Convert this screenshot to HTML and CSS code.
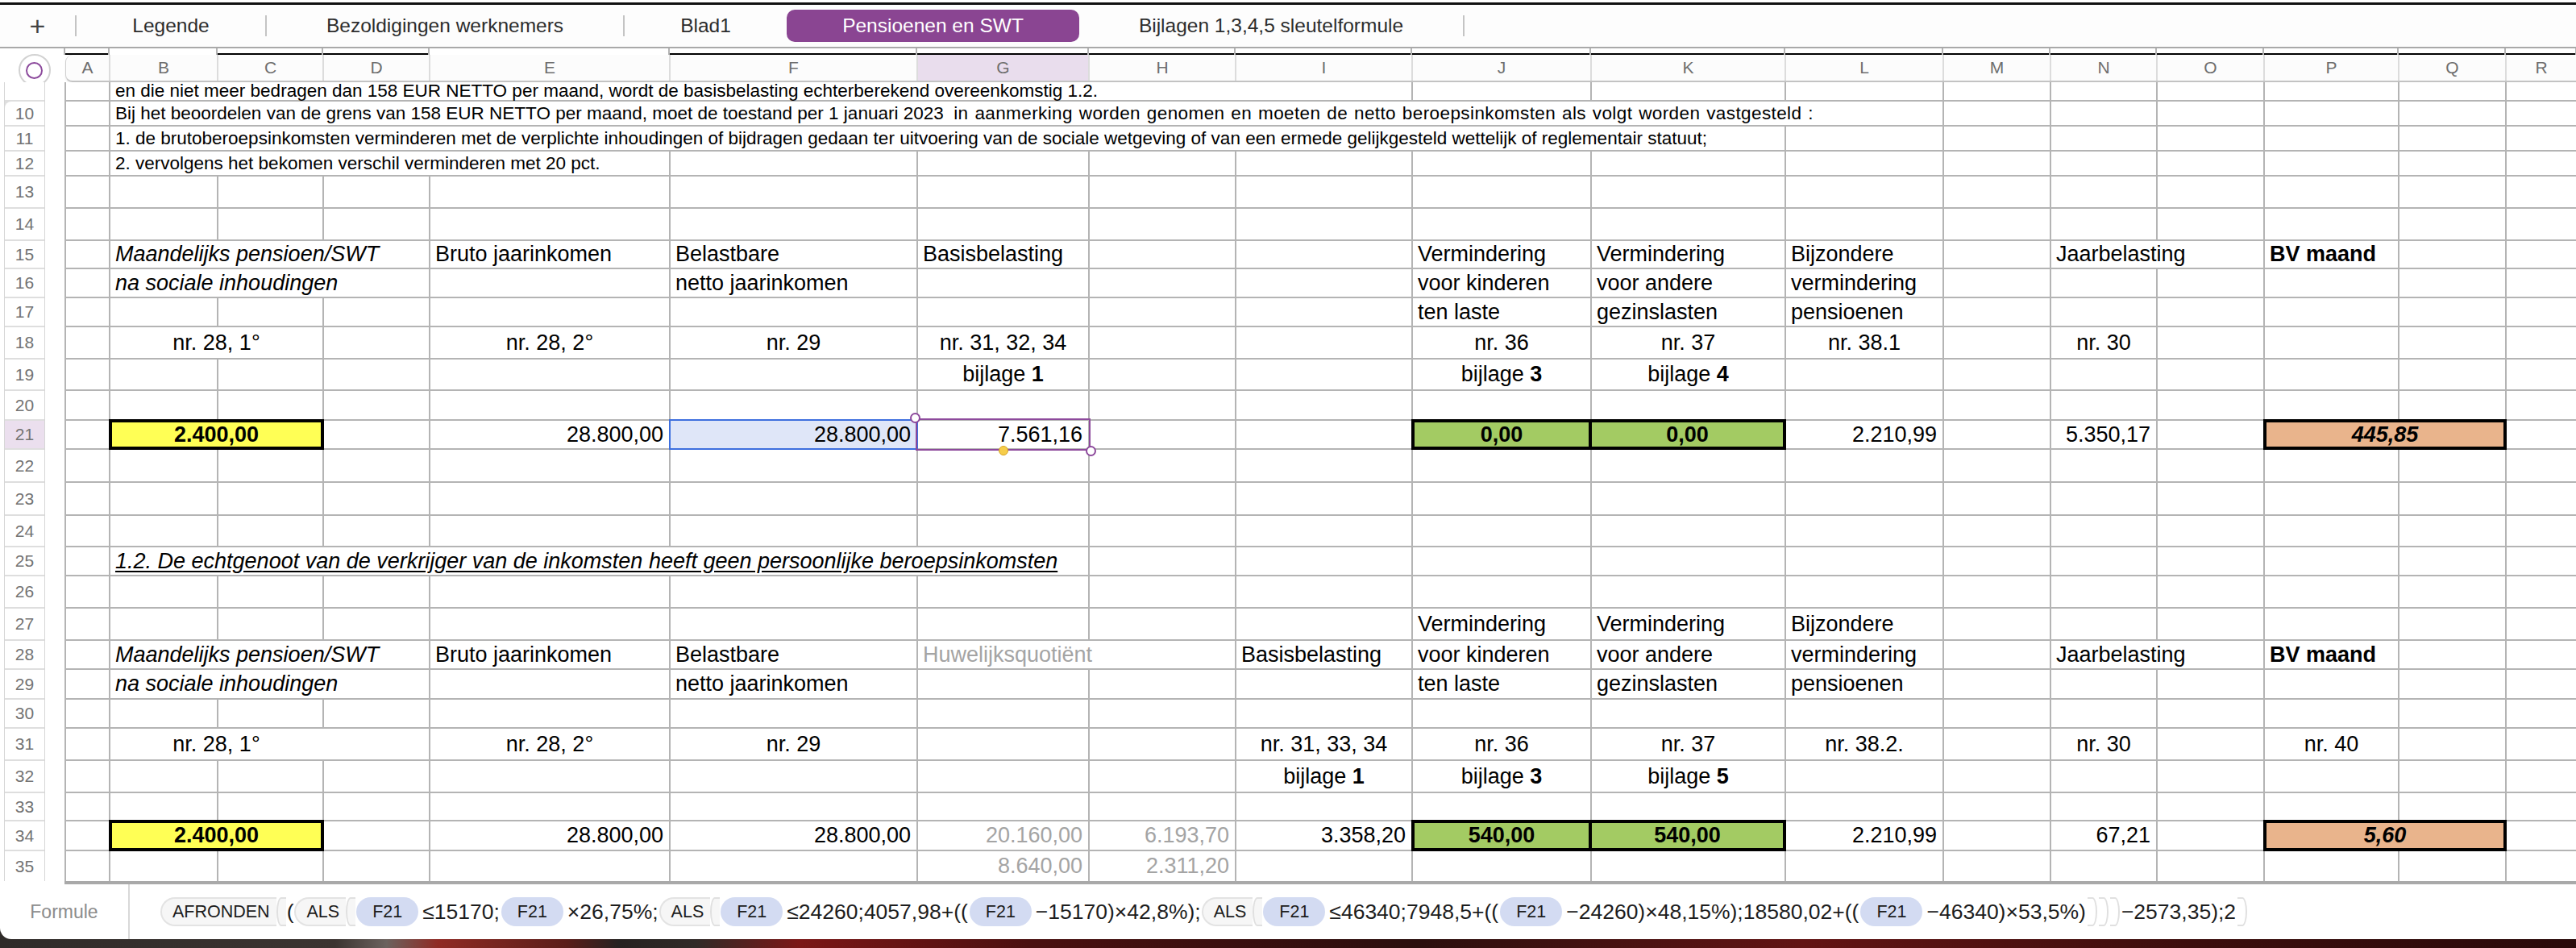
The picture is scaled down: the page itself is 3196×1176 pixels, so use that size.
FILE: index.html
```html
<!DOCTYPE html>
<html lang="nl">
<head>
<meta charset="utf-8">
<title>Pensioenen en SWT</title>
<link rel="stylesheet" href="styles.css">
</head>
<body>
<div class="app">
  <div class="tabs">
    <div class="tab t-plus">+</div><span class="sep"></span>
    <div class="tab t-leg">Legende</div><span class="sep"></span>
    <div class="tab t-bez">Bezoldigingen werknemers</div><span class="sep"></span>
    <div class="tab t-blad">Blad1</div>
    <div class="tab t-pen active">Pensioenen en SWT</div>
    <div class="tab t-bij">Bijlagen 1,3,4,5 sleutelformule</div><span class="sep"></span>
  </div>

  <div class="top">
    <div class="corner"><div class="circle"><div class="ring"></div></div></div>
    <div class="topright">
      <div class="strip">
        <i class="k"></i><i></i><i class="k"></i><i class="k"></i><i></i><i class="k"></i><i class="k"></i><i class="k"></i><i class="k"></i><i class="k"></i><i class="k"></i><i class="k"></i><i class="k"></i><i class="k"></i><i class="k"></i><i class="k"></i><i class="k"></i><i class="k"></i>
      </div>
      <div class="colhead">
        <div>A</div><div>B</div><div>C</div><div>D</div><div>E</div><div>F</div><div class="hl">G</div><div>H</div><div>I</div><div>J</div><div>K</div><div>L</div><div>M</div><div>N</div><div>O</div><div>P</div><div>Q</div><div>R</div>
      </div>
    </div>
  </div>

  <div class="main">
    <div class="rowhead">
      <div class="blank"></div>
      <div class="first">10</div><div>11</div><div>12</div><div>13</div><div>14</div><div>15</div><div>16</div><div>17</div><div>18</div><div>19</div><div>20</div><div class="hl">21</div><div>22</div><div>23</div><div>24</div><div>25</div><div>26</div><div>27</div><div>28</div><div>29</div><div>30</div><div>31</div><div>32</div><div>33</div><div>34</div><div>35</div>
    </div>

    <div class="sheet">
      <!-- row 9 -->
      <i></i><div class="s8 l sm">en die niet meer bedragen dan 158 EUR NETTO per maand, wordt de basisbelasting echterberekend overeenkomstig 1.2.</div><i></i><i></i><i></i><i></i><i></i><i></i><i></i><i></i><i></i>
      <!-- row 10 -->
      <i></i><div class="s11 l sm pre">Bij het beoordelen van de grens van 158 EUR NETTO per maand, moet de toestand per 1 januari 2023  <span class="wide">in aanmerking worden genomen en moeten de netto beroepsinkomsten als volgt worden vastgesteld :</span></div><i></i><i></i><i></i><i></i><i></i><i></i>
      <!-- row 11 -->
      <i></i><div class="s10 l sm">1. de brutoberoepsinkomsten verminderen met de verplichte inhoudingen of bijdragen gedaan ter uitvoering van de sociale wetgeving of van een ermede gelijkgesteld wettelijk of reglementair statuut;</div><i></i><i></i><i></i><i></i><i></i><i></i><i></i>
      <!-- row 12 -->
      <i></i><div class="s4 l sm">2. vervolgens het bekomen verschil verminderen met 20 pct.</div><i></i><i></i><i></i><i></i><i></i><i></i><i></i><i></i><i></i><i></i><i></i><i></i><i></i>
      <!-- row 13 -->
      <i></i><i></i><i></i><i></i><i></i><i></i><i></i><i></i><i></i><i></i><i></i><i></i><i></i><i></i><i></i><i></i><i></i><i></i>
      <!-- row 14 -->
      <i></i><i></i><i></i><i></i><i></i><i></i><i></i><i></i><i></i><i></i><i></i><i></i><i></i><i></i><i></i><i></i><i></i><i></i>
      <!-- row 15 -->
      <i></i><div class="s3 l it">Maandelijks pensioen/SWT</div><div class="l">Bruto jaarinkomen</div><div class="l">Belastbare</div><div class="l">Basisbelasting</div><i></i><i></i><div class="l">Vermindering</div><div class="l">Vermindering</div><div class="l">Bijzondere</div><i></i><div class="s2 l">Jaarbelasting</div><div class="l bd">BV maand</div><i></i><i></i>
      <!-- row 16 -->
      <i></i><div class="s3 l it">na sociale inhoudingen</div><i></i><div class="l">netto jaarinkomen</div><i></i><i></i><i></i><div class="l">voor kinderen</div><div class="l">voor andere</div><div class="l">vermindering</div><i></i><i></i><i></i><i></i><i></i><i></i>
      <!-- row 17 -->
      <i></i><i></i><i></i><i></i><i></i><i></i><i></i><i></i><i></i><div class="l">ten laste</div><div class="l">gezinslasten</div><div class="l">pensioenen</div><i></i><i></i><i></i><i></i><i></i><i></i>
      <!-- row 18 -->
      <i></i><div class="s2 c">nr. 28, 1°</div><i></i><div class="c">nr. 28, 2°</div><div class="c">nr. 29</div><div class="c">nr. 31, 32, 34</div><i></i><i></i><div class="c">nr. 36</div><div class="c">nr. 37</div><div class="c">nr. 38.1</div><i></i><div class="c">nr. 30</div><i></i><i></i><i></i><i></i>
      <!-- row 19 -->
      <i></i><i></i><i></i><i></i><i></i><i></i><div class="c">bijlage&nbsp;<b>1</b></div><i></i><i></i><div class="c">bijlage&nbsp;<b>3</b></div><div class="c">bijlage&nbsp;<b>4</b></div><i></i><i></i><i></i><i></i><i></i><i></i><i></i>
      <!-- row 20 -->
      <i></i><i></i><i></i><i></i><i></i><i></i><i></i><i></i><i></i><i></i><i></i><i></i><i></i><i></i><i></i><i></i><i></i><i></i>
      <!-- row 21 -->
      <i></i><div class="s2 c bd box yellow">2.400,00</div><i></i><div class="r">28.800,00</div><div class="r refcell">28.800,00</div><div class="r selcell">7.561,16<span class="h-tl"></span><span class="h-br"></span><span class="h-fill"></span></div><i></i><i></i><div class="c bd box green">0,00</div><div class="c bd box green join">0,00</div><div class="r">2.210,99</div><i></i><div class="r">5.350,17</div><i></i><div class="s2 c bd it box orange">445,85</div><i></i>
      <!-- row 22 -->
      <i></i><i></i><i></i><i></i><i></i><i></i><i></i><i></i><i></i><i></i><i></i><i></i><i></i><i></i><i></i><i></i><i></i><i></i>
      <!-- row 23 -->
      <i></i><i></i><i></i><i></i><i></i><i></i><i></i><i></i><i></i><i></i><i></i><i></i><i></i><i></i><i></i><i></i><i></i><i></i>
      <!-- row 24 -->
      <i></i><i></i><i></i><i></i><i></i><i></i><i></i><i></i><i></i><i></i><i></i><i></i><i></i><i></i><i></i><i></i><i></i><i></i>
      <!-- row 25 -->
      <i></i><div class="s6 l it ul">1.2. De echtgenoot van de verkrijger van de inkomsten heeft geen persoonlijke beroepsinkomsten</div><i></i><i></i><i></i><i></i><i></i><i></i><i></i><i></i><i></i><i></i><i></i>
      <!-- row 26 -->
      <i></i><i></i><i></i><i></i><i></i><i></i><i></i><i></i><i></i><i></i><i></i><i></i><i></i><i></i><i></i><i></i><i></i><i></i>
      <!-- row 27 -->
      <i></i><i></i><i></i><i></i><i></i><i></i><i></i><i></i><i></i><div class="l">Vermindering</div><div class="l">Vermindering</div><div class="l">Bijzondere</div><i></i><i></i><i></i><i></i><i></i><i></i>
      <!-- row 28 -->
      <i></i><div class="s3 l it">Maandelijks pensioen/SWT</div><div class="l">Bruto jaarinkomen</div><div class="l">Belastbare</div><div class="s2 l grey">Huwelijksquotiënt</div><div class="l">Basisbelasting</div><div class="l">voor kinderen</div><div class="l">voor andere</div><div class="l">vermindering</div><i></i><div class="s2 l">Jaarbelasting</div><div class="l bd">BV maand</div><i></i><i></i>
      <!-- row 29 -->
      <i></i><div class="s3 l it">na sociale inhoudingen</div><i></i><div class="l">netto jaarinkomen</div><i></i><i></i><i></i><div class="l">ten laste</div><div class="l">gezinslasten</div><div class="l">pensioenen</div><i></i><i></i><i></i><i></i><i></i><i></i>
      <!-- row 30 -->
      <i></i><i></i><i></i><i></i><i></i><i></i><i></i><i></i><i></i><i></i><i></i><i></i><i></i><i></i><i></i><i></i><i></i><i></i>
      <!-- row 31 -->
      <i></i><div class="s3 c bc">nr. 28, 1°</div><div class="c">nr. 28, 2°</div><div class="c">nr. 29</div><i></i><i></i><div class="c">nr. 31, 33, 34</div><div class="c">nr. 36</div><div class="c">nr. 37</div><div class="c">nr. 38.2.</div><i></i><div class="c">nr. 30</div><i></i><div class="c">nr. 40</div><i></i><i></i>
      <!-- row 32 -->
      <i></i><i></i><i></i><i></i><i></i><i></i><i></i><i></i><div class="c">bijlage&nbsp;<b>1</b></div><div class="c">bijlage&nbsp;<b>3</b></div><div class="c">bijlage&nbsp;<b>5</b></div><i></i><i></i><i></i><i></i><i></i><i></i><i></i>
      <!-- row 33 -->
      <i></i><i></i><i></i><i></i><i></i><i></i><i></i><i></i><i></i><i></i><i></i><i></i><i></i><i></i><i></i><i></i><i></i><i></i>
      <!-- row 34 -->
      <i></i><div class="s2 c bd box yellow">2.400,00</div><i></i><div class="r">28.800,00</div><div class="r">28.800,00</div><div class="r grey">20.160,00</div><div class="r grey">6.193,70</div><div class="r">3.358,20</div><div class="c bd box green">540,00</div><div class="c bd box green join">540,00</div><div class="r">2.210,99</div><i></i><div class="r">67,21</div><i></i><div class="s2 c bd it box orange">5,60</div><i></i>
      <!-- row 35 -->
      <i></i><i></i><i></i><i></i><i></i><i></i><div class="r grey">8.640,00</div><div class="r grey">2.311,20</div><i></i><i></i><i></i><i></i><i></i><i></i><i></i><i></i><i></i><i></i>
    </div>
  </div>

  <div class="bottom">
    <div class="fbar">
      <div class="flabel">Formule</div>
      <div class="ftok">
        <span class="fn">AFRONDEN</span><span class="ob"></span><span class="tx paren">(</span><span class="fn">ALS</span><span class="ob"></span><span class="ref">F21</span><span class="tx">≤15170;</span><span class="ref">F21</span><span class="tx">×26,75%;</span><span class="fn">ALS</span><span class="ob"></span><span class="ref">F21</span><span class="tx">≤24260;4057,98+((</span><span class="ref">F21</span><span class="tx">−15170)×42,8%);</span><span class="fn">ALS</span><span class="ob"></span><span class="ref">F21</span><span class="tx">≤46340;7948,5+((</span><span class="ref">F21</span><span class="tx">−24260)×48,15%);18580,02+((</span><span class="ref">F21</span><span class="tx">−46340)×53,5%)</span><span class="cb"></span><span class="cb"></span><span class="cb"></span><span class="tx">−2573,35);2</span><span class="cb"></span>
      </div>
    </div>
    <div class="desk"></div>
  </div>
</div>
</body>
</html>
```

FILE: styles.css
```css
* { box-sizing: border-box; margin: 0; padding: 0; }

:root {
  --cols: 53px 132px 129px 130px 296px 305px 211px 180px 217px 220px 239px 194px 131px 130px 131px 165px 131px 86px;
  --rows: 22px 29px 29px 29px 38px 38px 33px 34px 34px 38px 37px 35px 34px 39px 39px 37px 34px 38px 38px 34px 35px 34px 38px 38px 33px 35px 37px;
  --line: #b4b4b4;
}

html, body { background: #fff; }

body {
  width: 3196px;
  height: 1176px;
  overflow: hidden;
  font-family: "Liberation Sans", Arial, sans-serif;
  color: #000;
}

.app {
  display: flex;
  flex-direction: column;
  height: 1176px;
}

/* ---------- sheet tabs ---------- */
.tabs {
  margin-top: 3px;
  height: 57px;
  border-top: 3px solid #111;
  border-bottom: 2px solid #a9a9a9;
  background: #fdfdfd;
  display: flex;
  align-items: center;
  font-size: 24.5px;
  color: #2d2d2d;
}

.tab {
  display: flex;
  align-items: center;
  justify-content: center;
  height: 40px;
  white-space: nowrap;
}

.t-plus { width: 93px; font-size: 34px; font-weight: 300; color: #444; }
.t-leg { width: 234px; }
.t-bez { width: 442px; }
.t-blad { width: 201px; }
.t-pen { width: 363px; }
.t-bij { width: 476px; }

.tab.active {
  background: #8a4592;
  color: #fff;
  border-radius: 10px;
}

.sep {
  width: 2px;
  height: 26px;
  background: #c4c4c4;
}

/* ---------- column header area ---------- */
.top {
  display: flex;
  height: 42px;
}

.corner {
  width: 80px;
  padding-left: 6px;
  padding-top: 12px;
  display: flex;
  align-items: center;
  justify-content: center;
}

.circle {
  width: 40px;
  height: 40px;
  border-radius: 50%;
  border: 2px solid #d2d2d2;
  background: #fff;
  display: flex;
  align-items: center;
  justify-content: center;
}

.ring {
  width: 21px;
  height: 21px;
  border-radius: 50%;
  border: 2.5px solid #8c4a9c;
}

.topright {
  flex: 1;
  display: flex;
  flex-direction: column;
}

.strip {
  height: 8px;
  display: grid;
  grid-template-columns: var(--cols);
  column-gap: 2px;
  padding-left: 2px;
  background: var(--line);
}

.strip > i { background: #fff; }
.strip > i.k { border-bottom: 2px solid #000; }

.colhead {
  height: 34px;
  margin-left: 2px;
  display: grid;
  grid-template-columns: var(--cols);
  column-gap: 2px;
  background: #dcdcdc;
  border-bottom: 2px solid #c3c3c3;
  border-left: 1px solid #cfcfcf;
  border-radius: 9px 0 0 9px;
  overflow: hidden;
  box-shadow: 0 2px 2px rgba(0,0,0,0.08);
}

.colhead > div {
  background: #fcfcfc;
  display: flex;
  align-items: center;
  justify-content: center;
  font-size: 21px;
  color: #6e6e6e;
}

.colhead > div.hl { background: #e9dded; }

/* ---------- main grid ---------- */
.main {
  display: flex;
  height: 995px;
}

.rowhead {
  margin-left: 5px;
  width: 51px;
  display: grid;
  grid-template-rows: var(--rows);
  row-gap: 2px;
  background: #dedede;
  align-self: start;
  border-left: 1px solid #d6d6d6;
  border-right: 1px solid #d6d6d6;
}

.rowhead > div {
  background: #fff;
  display: flex;
  align-items: center;
  justify-content: center;
  font-size: 21px;
  color: #737373;
}

.rowhead > .first { border-top-left-radius: 8px; }
.rowhead > .hl { background: #ebdfee; }

.sheet {
  margin-left: 24px;
  display: grid;
  grid-template-columns: var(--cols);
  grid-template-rows: var(--rows);
  gap: 2px;
  padding-left: 2px;
  background: var(--line);
  border-bottom: 4px solid #a9a9a9;
  align-self: start;
  font-size: 27px;
}

.sheet > * {
  background: #fff;
  display: flex;
  align-items: center;
  white-space: nowrap;
  min-width: 0;
  font-style: normal;
}

.sheet > .sm { font-size: 22.5px; }
.sheet > .pre { white-space: pre; }
.wide { letter-spacing: 0.4px; word-spacing: 1.2px; }

.l { padding-left: 6px; }
.r { justify-content: flex-end; padding-right: 7px; }
.c { justify-content: center; }
.bc { padding-right: 132px; }

.sheet > .it { font-style: italic; }
.bd { font-weight: bold; }
.ul { text-decoration: underline; text-underline-offset: 3px; }
.grey { color: #a4a4a4; }

.s2 { grid-column: span 2; }
.s3 { grid-column: span 3; }
.s4 { grid-column: span 4; }
.s6 { grid-column: span 6; }
.s8 { grid-column: span 8; }
.s10 { grid-column: span 10; }
.s11 { grid-column: span 11; }

.sheet > .box {
  border: 2px solid #000;
  outline: 2px solid #000;
}

.sheet > .box.join { border-left: 0; }

.sheet > .yellow { background: #ffff55; }
.sheet > .green { background: #a3cb63; }
.sheet > .orange { background: #e9b48c; }

.sheet > .refcell {
  background: #dfe6f8;
  outline: 2px solid #3d6fde;
}

.sheet > .selcell {
  position: relative;
  outline: 2px solid #8d4a9c;
  outline-offset: 1px;
}

.h-tl, .h-br, .h-fill {
  position: absolute;
  border-radius: 50%;
}

.h-tl, .h-br {
  width: 13px;
  height: 13px;
  background: #fff;
  border: 2px solid #8d4a9c;
}

.h-tl { left: -10px; top: -10px; }
.h-br { right: -10px; bottom: -10px; }

.h-fill {
  width: 12px;
  height: 12px;
  left: 100px;
  bottom: -9px;
  background: #f6cd4a;
  border: 1.5px solid #d9a524;
}

/* ---------- formula bar ---------- */
.bottom {
  flex: 1;
  display: flex;
  flex-direction: column;
  background: linear-gradient(90deg, #2f2b29 0%, #3b3431 13%, #6b625e 15%, #8f2a24 17%, #5a1d19 22%, #262221 24%, #302a27 27%, #7b1717 31%, #4a1010 40%, #2b0f0e 55%, #621414 70%, #3c0e0d 85%, #2a0a0a 100%);
}

.fbar {
  height: 68px;
  background: #fff;
  border-radius: 0 0 0 14px;
  display: flex;
  align-items: stretch;
}

.flabel {
  width: 161px;
  border-right: 2px solid #d8d8d8;
  display: flex;
  align-items: center;
  justify-content: center;
  font-size: 23px;
  color: #8c8c8c;
}

.ftok {
  padding-left: 38px;
  display: flex;
  align-items: center;
  font-size: 26.5px;
  color: #1d1d1d;
  white-space: nowrap;
}

.fn {
  height: 36px;
  display: flex;
  align-items: center;
  padding: 0 8px 0 13px;
  border: 2px solid #e3e3e3;
  border-right: 0;
  border-radius: 18px 0 0 18px;
  background: #f6f6f6;
  font-size: 21.5px;
}

.ob {
  width: 12px;
  height: 36px;
  border: 2px solid #e0e0e0;
  border-right: 0;
  border-radius: 50% 0 0 50%;
  background: #f6f6f6;
}

.paren { padding: 0 6px 0 2px; }

.ref {
  height: 36px;
  display: flex;
  align-items: center;
  padding: 0 20px;
  border-radius: 18px;
  background: #d3dbf2;
  margin: 0 4px 0 1px;
  font-size: 21.5px;
}

.tx { padding: 0 1px; }

.cb {
  width: 12px;
  height: 36px;
  border: 2px solid #e0e0e0;
  border-left: 0;
  border-radius: 0 50% 50% 0;
  margin: 0 1px;
}

.desk { height: 11px; }
```
